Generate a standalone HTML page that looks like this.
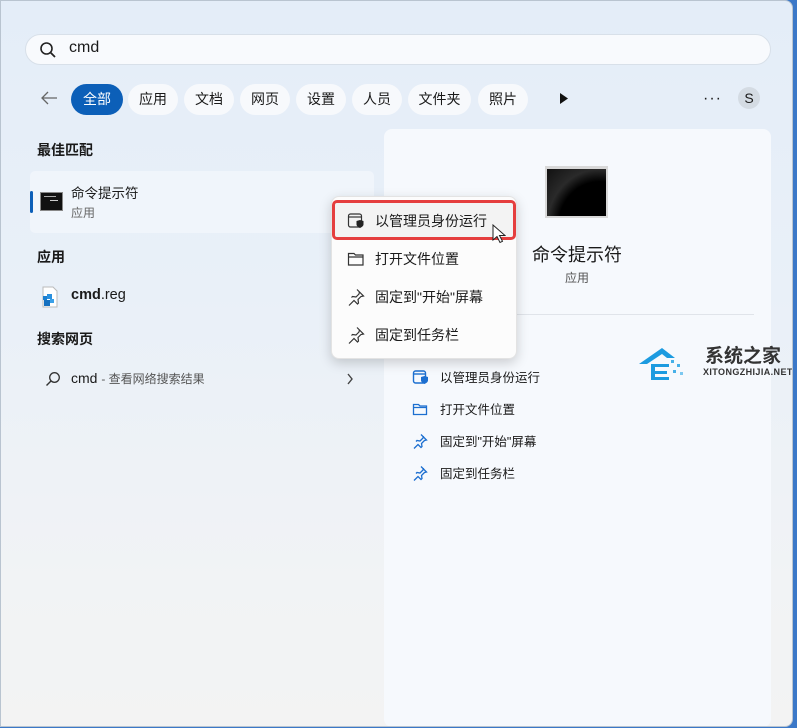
<!DOCTYPE html>
<html><head><meta charset="utf-8"><style>
*{margin:0;padding:0;box-sizing:border-box}
body{width:797px;height:728px;overflow:hidden;background:#3b78c8;font-family:"Liberation Sans","Noto Sans CJK SC",sans-serif;color:#1a1a1a;position:relative}
.win{position:absolute;left:0;top:0;width:793px;height:727px;border-radius:0 8px 8px 0;background:linear-gradient(180deg,#e4edf8 0%,#e9f0f8 40%,#f1f3f5 80%,#f3f3f3 100%);border:1px solid #b9c4d0;overflow:hidden}
.abs{position:absolute}
.search{left:24px;top:33px;width:746px;height:31px;border-radius:16px;background:#f8fafd;border:1px solid #d8e0e9}
.chip{position:absolute;top:83px;height:31px;border-radius:16px;background:#f7f9fc;font-size:14px;line-height:31px;text-align:center;color:#1a1a1a}
.chip.on{background:#0c5fb8;color:#fff}
.h{font-size:14px;font-weight:bold;color:#1a1a1a}
.rp{left:383px;top:128px;width:387px;height:598px;border-radius:8px;background:#f6f9fd}
.menu{left:330px;top:195px;width:186px;height:163px;background:#fcfcfc;border-radius:8px;box-shadow:0 4px 12px rgba(0,0,0,.18);border:1px solid #e3e3e3}
.mi{position:absolute;left:16px;font-size:14px;display:flex;align-items:center;gap:10px}
.act{position:absolute;left:411px;font-size:12.5px;display:flex;align-items:center;gap:8px}
</style></head><body>
<div class="win">
<div class="abs search"></div>
<svg class="abs" style="left:38px;top:40px" width="18" height="18" viewBox="0 0 18 18"><circle cx="7.5" cy="7.5" r="5.5" fill="none" stroke="#222" stroke-width="1.6"/><path d="M11.5 11.5L16 16" stroke="#222" stroke-width="1.8"/></svg>
<div class="abs" style="left:68px;top:38px;font-size:16px;color:#1a1a1a">cmd</div>
<svg class="abs" style="left:38px;top:88px" width="20" height="18" viewBox="0 0 20 18"><path d="M18 9H3M9 3L3 9l6 6" fill="none" stroke="#666" stroke-width="1.3"/></svg>
<div class="chip on" style="left:70px;width:52px">全部</div>
<div class="chip" style="left:127px;width:50px">应用</div>
<div class="chip" style="left:183px;width:50px">文档</div>
<div class="chip" style="left:239px;width:50px">网页</div>
<div class="chip" style="left:295px;width:50px">设置</div>
<div class="chip" style="left:351px;width:50px">人员</div>
<div class="chip" style="left:407px;width:63px">文件夹</div>
<div class="chip" style="left:477px;width:50px">照片</div>
<svg class="abs" style="left:557px;top:91px" width="12" height="13"><path d="M2 1L10 6.5 2 12z" fill="#111"/></svg>
<div class="abs" style="left:702px;top:89px;font-size:16px;letter-spacing:1px">···</div>
<div class="abs" style="left:737px;top:86px;width:22px;height:22px;border-radius:50%;background:#d4dbe3;font-size:14px;text-align:center;line-height:22px">S</div>

<div class="abs h" style="left:36px;top:139px">最佳匹配</div>
<div class="abs" style="left:29px;top:170px;width:344px;height:62px;border-radius:5px;background:#f0f5fb"></div>
<div class="abs" style="left:29px;top:190px;width:3px;height:22px;border-radius:2px;background:#0c5fb8"></div>
<div class="abs" style="left:39px;top:191px;width:23px;height:19px;background:#111;border:1px solid #888"><div style="margin:3px 0 0 3px;width:12px;height:1px;background:#aaa"></div><div style="margin:3px 0 0 9px;width:8px;height:1px;background:#ccc"></div></div>
<div class="abs" style="left:70px;top:181px;font-size:13.5px">命令提示符</div>
<div class="abs" style="left:70px;top:203px;font-size:12px;color:#666">应用</div>

<div class="abs h" style="left:36px;top:246px">应用</div>
<svg class="abs" style="left:40px;top:285px" width="18" height="22" viewBox="0 0 18 22"><path d="M2 1h10l4 4v16H2z" fill="#fff" stroke="#bbb"/><rect x="2" y="10" width="4" height="4" fill="#1b7fd0"/><rect x="6" y="8" width="5" height="5" fill="#2a90de"/><rect x="3" y="14" width="6" height="6" fill="#1470c0"/><rect x="9" y="13" width="4" height="4" fill="#3aa0e8"/></svg>
<div class="abs" style="left:70px;top:286px;font-size:14.5px"><b>cmd</b>.reg</div>
<div class="abs h" style="left:36px;top:328px">搜索网页</div>
<svg class="abs" style="left:44px;top:370px" width="16" height="16" viewBox="0 0 16 16"><circle cx="9.5" cy="6.5" r="4.8" fill="none" stroke="#333" stroke-width="1.3"/><path d="M6 10L1.5 14.5" stroke="#333" stroke-width="1.4"/></svg>
<div class="abs" style="left:70px;top:369px;font-size:14px">cmd <span style="font-size:12px;color:#555">- 查看网络搜索结果</span></div>
<svg class="abs" style="left:345px;top:372px" width="8" height="12"><path d="M2 1l4 5-4 5" fill="none" stroke="#444" stroke-width="1.4"/></svg>

<div class="abs rp"></div>
<div class="abs" style="left:544px;top:165px;width:63px;height:52px;background:#d8d8d8;padding:3px 2px 2px 2px"><div style="width:100%;height:100%;background:radial-gradient(ellipse at 90% 120%,#000 55%,#2a2a2a 70%,#111 100%)"></div></div>
<div class="abs" style="left:531px;top:240px;font-size:18px">命令提示符</div>
<div class="abs" style="left:564px;top:268px;font-size:12px;color:#555">应用</div>
<div class="abs" style="left:413px;top:313px;width:340px;height:1px;background:#e0e4ea"></div>
<div class="act" style="top:366px"><svg width="16" height="16" viewBox="0 0 16 16"><rect x="1.5" y="2" width="12" height="12" rx="2" fill="none" stroke="#1c6fd0" stroke-width="1.4"/><path d="M1.5 5h12" stroke="#1c6fd0" stroke-width="1.4"/><path d="M9 8l3.5-1 3.5 1v3.5c0 2-3.5 3.5-3.5 3.5S9 13.5 9 11.5z" fill="#1c6fd0"/></svg><span style="margin-left:4px">以管理员身份运行</span></div>
<div class="act" style="top:398px"><svg width="16" height="16" viewBox="0 0 16 16"><path d="M1.5 3.5h5l1.5 1.5h6.5v8.5h-13z M1.5 6.5h13" fill="none" stroke="#1c6fd0" stroke-width="1.3"/></svg><span style="margin-left:4px">打开文件位置</span></div>
<div class="act" style="top:430px"><svg width="16" height="16" viewBox="0 0 16 16"><path d="M9 1.5l5.5 5.5-2 .5-3 3 .5 3-1 1-3-3-4 4M4 8.5l1-1 3 .5 3-3 .5-2" fill="none" stroke="#1c6fd0" stroke-width="1.3"/></svg><span style="margin-left:4px">固定到"开始"屏幕</span></div>
<div class="act" style="top:462px"><svg width="16" height="16" viewBox="0 0 16 16"><path d="M9 1.5l5.5 5.5-2 .5-3 3 .5 3-1 1-3-3-4 4M4 8.5l1-1 3 .5 3-3 .5-2" fill="none" stroke="#1c6fd0" stroke-width="1.3"/></svg><span style="margin-left:4px">固定到任务栏</span></div>

<svg class="abs" style="left:636px;top:343px" width="50" height="40" viewBox="0 0 50 40"><path d="M2 20L25 4 38 14H30L25 10 10 20z" fill="#1c9be0"/><rect x="14" y="20" width="4" height="16" fill="#1c9be0"/><rect x="18" y="20" width="14" height="3" fill="#1c9be0"/><rect x="18" y="27" width="12" height="3" fill="#1c9be0"/><rect x="18" y="33" width="14" height="3" fill="#1c9be0"/><rect x="34" y="16" width="3" height="3" fill="#46b0e8"/><rect x="40" y="20" width="3" height="3" fill="#46b0e8"/><rect x="36" y="26" width="3" height="3" fill="#46b0e8"/><rect x="43" y="28" width="3" height="3" fill="#7cc8f0"/></svg>
<div class="abs" style="left:704px;top:340px;font-size:19px;font-weight:bold;color:#333">系统之家</div>
<div class="abs" style="left:702px;top:366px;font-size:9px;color:#333;letter-spacing:0.4px;font-weight:bold">XITONGZHIJIA.NET</div>

<div class="abs menu"></div>
<div class="abs" style="left:331px;top:199px;width:184px;height:40px;background:#f3f3f3;border:3px solid #e53e3e;border-radius:5px"></div>
<div class="mi" style="left:346px;top:210px"><svg width="18" height="18" viewBox="0 0 18 18"><rect x="1.5" y="2" width="13" height="13" rx="2" fill="none" stroke="#333" stroke-width="1.2"/><path d="M1.5 5h13" stroke="#333" stroke-width="1.2"/><path d="M9.5 9l3.5-1 3.5 1v3.5c0 2-3.5 3.5-3.5 3.5s-3.5-1.5-3.5-3.5z" fill="#222"/></svg><span>以管理员身份运行</span></div>
<div class="mi" style="left:346px;top:248px"><svg width="18" height="18" viewBox="0 0 18 18"><path d="M1.5 3.5h5.5l1.5 1.5h7.5v10h-14.5z M1.5 7h14.5" fill="none" stroke="#333" stroke-width="1.2"/></svg><span>打开文件位置</span></div>
<div class="mi" style="left:346px;top:286px"><svg width="18" height="18" viewBox="0 0 18 18"><path d="M10 1.5l6.5 6.5-2.5.5-3 3 .5 3.5-1 1-3.5-3.5-5 5M4.5 9.5l1-1 3.5.5 3-3 .5-2.5" fill="none" stroke="#333" stroke-width="1.2"/></svg><span>固定到"开始"屏幕</span></div>
<div class="mi" style="left:346px;top:324px"><svg width="18" height="18" viewBox="0 0 18 18"><path d="M10 1.5l6.5 6.5-2.5.5-3 3 .5 3.5-1 1-3.5-3.5-5 5M4.5 9.5l1-1 3.5.5 3-3 .5-2.5" fill="none" stroke="#333" stroke-width="1.2"/></svg><span>固定到任务栏</span></div>
<svg class="abs" style="left:491px;top:223px" width="14" height="20" viewBox="0 0 14 20"><path d="M1 1v15l4-3.5 3 6 2.5-1.2-3-5.8h5.5z" fill="#fff" stroke="#222" stroke-width="1"/></svg>
</div>
</body></html>
